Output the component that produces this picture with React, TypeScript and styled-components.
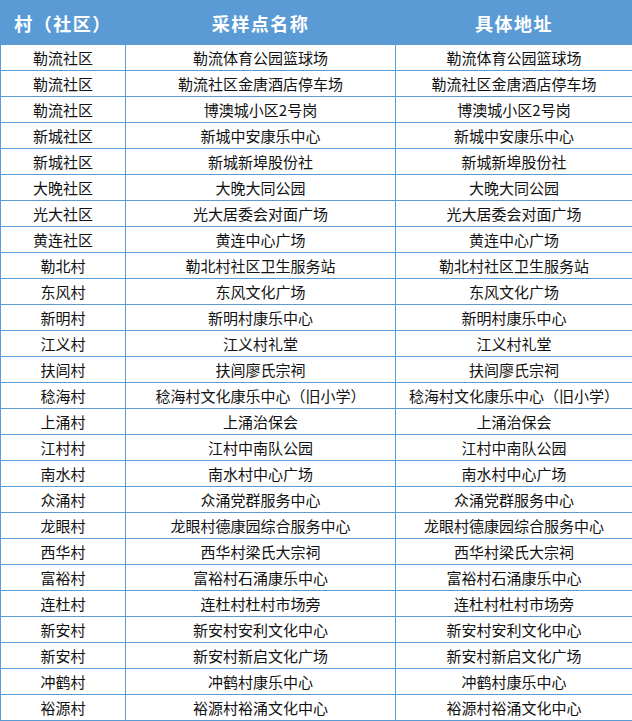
import React from 'react';
import styled, { createGlobalStyle } from 'styled-components';

const BLUE = '#5b9bd5';

const GlobalStyle = createGlobalStyle`
  html, body {
    margin: 0;
    padding: 0;
    background: #ffffff;
  }
  body {
    font-family: "Noto Sans CJK SC", "Noto Sans", sans-serif;
  }
`;

const rows: [string, string, string][] = [
  ['勒流社区', '勒流体育公园篮球场', '勒流体育公园篮球场'],
  ['勒流社区', '勒流社区金唐酒店停车场', '勒流社区金唐酒店停车场'],
  ['勒流社区', '博澳城小区2号岗', '博澳城小区2号岗'],
  ['新城社区', '新城中安康乐中心', '新城中安康乐中心'],
  ['新城社区', '新城新埠股份社', '新城新埠股份社'],
  ['大晚社区', '大晚大同公园', '大晚大同公园'],
  ['光大社区', '光大居委会对面广场', '光大居委会对面广场'],
  ['黄连社区', '黄连中心广场', '黄连中心广场'],
  ['勒北村', '勒北村社区卫生服务站', '勒北村社区卫生服务站'],
  ['东风村', '东风文化广场', '东风文化广场'],
  ['新明村', '新明村康乐中心', '新明村康乐中心'],
  ['江义村', '江义村礼堂', '江义村礼堂'],
  ['扶闾村', '扶闾廖氏宗祠', '扶闾廖氏宗祠'],
  ['稔海村', '稔海村文化康乐中心（旧小学）', '稔海村文化康乐中心（旧小学）'],
  ['上涌村', '上涌治保会', '上涌治保会'],
  ['江村村', '江村中南队公园', '江村中南队公园'],
  ['南水村', '南水村中心广场', '南水村中心广场'],
  ['众涌村', '众涌党群服务中心', '众涌党群服务中心'],
  ['龙眼村', '龙眼村德康园综合服务中心', '龙眼村德康园综合服务中心'],
  ['西华村', '西华村梁氏大宗祠', '西华村梁氏大宗祠'],
  ['富裕村', '富裕村石涌康乐中心', '富裕村石涌康乐中心'],
  ['连杜村', '连杜村杜村市场旁', '连杜村杜村市场旁'],
  ['新安村', '新安村安利文化中心', '新安村安利文化中心'],
  ['新安村', '新安村新启文化广场', '新安村新启文化广场'],
  ['冲鹤村', '冲鹤村康乐中心', '冲鹤村康乐中心'],
  ['裕源村', '裕源村裕涌文化中心', '裕源村裕涌文化中心'],
];

const Table = styled.table`
  width: 632px;
  border-collapse: collapse;
  table-layout: fixed;
  border-spacing: 0;
`;

const HeadRow = styled.tr`
  height: 44px;
`;

const BodyRow = styled.tr`
  height: 26px;
`;

const HeadCell = styled.th`
  padding: 0;
  background: ${BLUE};
  border: 1px solid ${BLUE};
  color: #ffffff;
  font-size: 18px;
  font-weight: 700;
  line-height: 20px;
  letter-spacing: 1.5px;
  text-align: center;
  vertical-align: middle;
`;

const Cell = styled.td`
  padding: 0;
  border: 1px solid ${BLUE};
  color: #111111;
  font-size: 15px;
  line-height: 18px;
  text-align: center;
  vertical-align: middle;
  white-space: nowrap;
  overflow: hidden;
`;

export default function App() {
  return (
    <>
      <GlobalStyle />
      <Table>
        <colgroup>
          <col style={{ width: 125 }} />
          <col style={{ width: 270 }} />
          <col style={{ width: 237 }} />
        </colgroup>
        <thead>
          <HeadRow>
            <HeadCell>村（社区）</HeadCell>
            <HeadCell>采样点名称</HeadCell>
            <HeadCell>具体地址</HeadCell>
          </HeadRow>
        </thead>
        <tbody>
          {rows.map(([village, site, address], i) => (
            <BodyRow key={i}>
              <Cell>{village}</Cell>
              <Cell>{site}</Cell>
              <Cell>{address}</Cell>
            </BodyRow>
          ))}
        </tbody>
      </Table>
    </>
  );
}
